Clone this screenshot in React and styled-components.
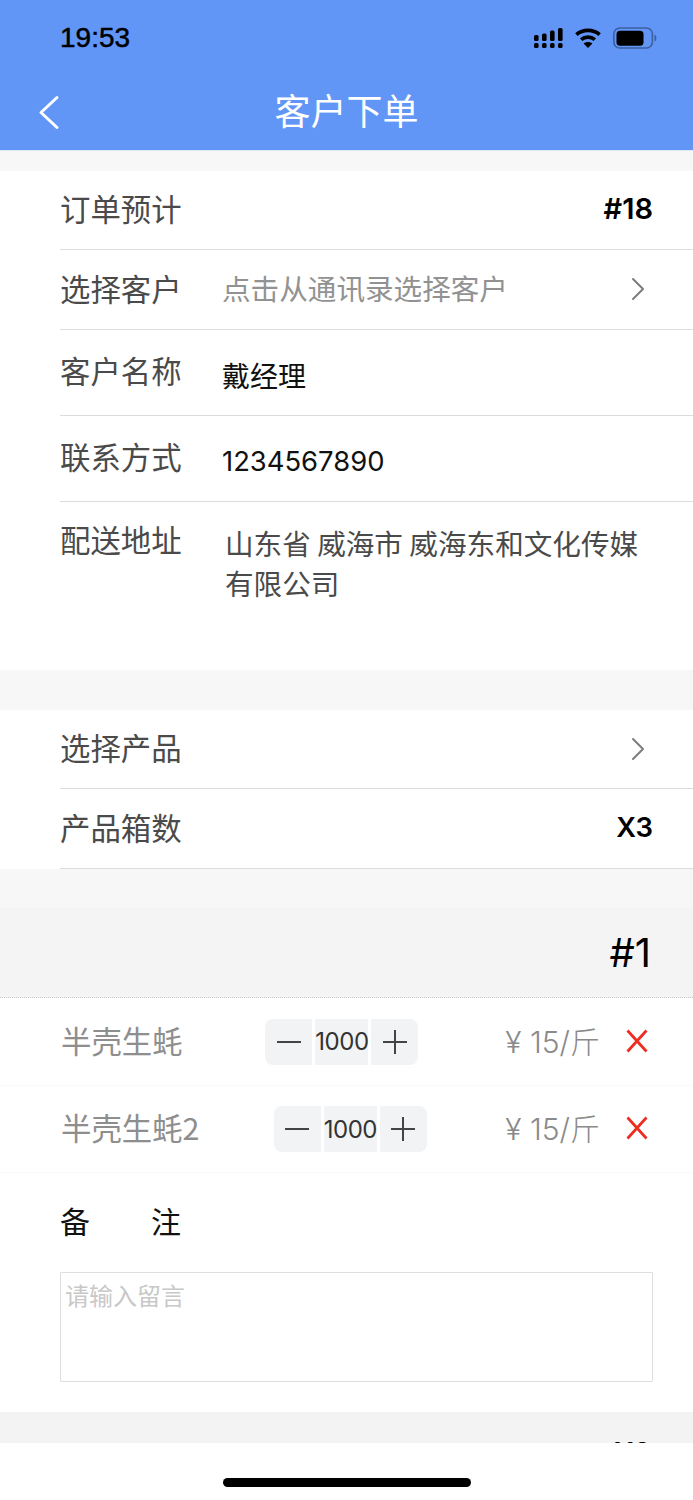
import React from "react";
import styled, { createGlobalStyle } from "styled-components";

const GlobalStyle = createGlobalStyle`
  * { box-sizing: border-box; }
  html, body { margin: 0; padding: 0; background: #fff; }
  body { font-family: Inter, "Noto Sans CJK SC", sans-serif; }
`;

export default function App() {
  return (
    <>
      <GlobalStyle />
      <Page>
        <Header>
          <StatusBar>
            <Time>19:53</Time>
            <StatusIcons>
              <SignalIcon />
              <WifiIcon />
              <BatteryIcon />
            </StatusIcons>
          </StatusBar>
          <NavBar>
            <BackButton>
              <svg width="24" height="36" viewBox="0 0 24 36" fill="none">
                <path d="M20 2.5 L4 17.5 L20 32.5" stroke="#fff" strokeWidth="3" strokeLinecap="round" strokeLinejoin="round" />
              </svg>
            </BackButton>
            <Title>客户下单</Title>
          </NavBar>
        </Header>

        <Gap $h={20} />
        <Section>
          <Row $h={79}>
            <Label>订单预计</Label>
            <Value>#18</Value>
          </Row>
          <Row $h={80}>
            <Label>选择客户</Label>
            <Placeholder>点击从通讯录选择客户</Placeholder>
            <Chevron />
          </Row>
          <Row $h={86}>
            <Label $up>客户名称</Label>
            <InputText $size={28}>戴经理</InputText>
          </Row>
          <Row $h={86}>
            <Label $up>联系方式</Label>
            <InputText $size={27.4}>1234567890</InputText>
          </Row>
          <AddressRow>
            <AddressLabel>配送地址</AddressLabel>
            <Address>山东省 威海市 威海东和文化传媒有限公司</Address>
          </AddressRow>
        </Section>

        <Gap $h={40} />
        <Section>
          <Row $h={79}>
            <Label>选择产品</Label>
            <Chevron />
          </Row>
          <Row $h={80}>
            <Label>产品箱数</Label>
            <Value $size={27.5}>X3</Value>
          </Row>
        </Section>

        <Gap $h={39} />
        <BoxHeader>#1</BoxHeader>
        <Product name="半壳生蚝" h={88} />
        <Product name="半壳生蚝2" h={87} />

        <NoteBlock>
          <NoteLabel>
            <span>备</span>
            <span>注</span>
          </NoteLabel>
          <NoteBox placeholder="请输入留言" readOnly />
        </NoteBlock>

        <NextBox>
          <NextValue>X3</NextValue>
        </NextBox>

        <HomeBar>
          <HomeIndicator />
        </HomeBar>
      </Page>
    </>
  );
}

function Product({ name, h }) {
  return (
    <ProductRow $h={h}>
      <ProductName>{name}</ProductName>
      <StepperSlot>
        <Stepper>
          <StepButton $side="left">
            <svg width="24" height="24" viewBox="0 0 24 24"><path d="M0 12 H24" stroke="#444" strokeWidth="2" /></svg>
          </StepButton>
          <StepCount>1000</StepCount>
          <StepButton $side="right">
            <svg width="24" height="24" viewBox="0 0 24 24"><path d="M0 12 H24 M12 0 V24" stroke="#444" strokeWidth="2" /></svg>
          </StepButton>
        </Stepper>
      </StepperSlot>
      <Price>¥ 15/斤</Price>
      <RemoveIcon>
        <svg width="22" height="24" viewBox="0 0 22 24"><path d="M1.5 1.5 L20.5 22.5 M20.5 1.5 L1.5 22.5" stroke="#ec2f22" strokeWidth="2.8" /></svg>
      </RemoveIcon>
    </ProductRow>
  );
}

function SignalIcon() {
  return (
    <svg width="29" height="20" viewBox="0 0 29 20" fill="#000">
      <rect x="0" y="7" width="4.6" height="6" rx="1.6" />
      <rect x="8" y="5.5" width="4.6" height="7.5" rx="1.6" />
      <rect x="16" y="2.5" width="4.6" height="10.5" rx="1.6" />
      <rect x="24" y="0" width="4.6" height="13" rx="1.6" />
      <rect x="0" y="15" width="4.6" height="5" rx="1.6" />
      <rect x="8" y="15" width="4.6" height="5" rx="1.6" />
      <rect x="16" y="15" width="4.6" height="5" rx="1.6" />
      <rect x="24" y="15" width="4.6" height="5" rx="1.6" />
    </svg>
  );
}

function WifiIcon() {
  return (
    <svg width="26" height="20" viewBox="0 0 26 20" fill="none" stroke="#000" strokeWidth="3.8">
      <path d="M1.4 6.6 C8 1 18 1 24.6 6.6" />
      <path d="M6.2 11.6 C10 8.4 16 8.4 19.8 11.6" />
      <path d="M13 20 L8.6 15.4 C11 13.4 15 13.4 17.4 15.4 Z" fill="#000" stroke="none" />
    </svg>
  );
}

function BatteryIcon() {
  return (
    <svg width="44" height="22" viewBox="0 0 44 22" fill="none">
      <rect x="0.8" y="1" width="38.6" height="20" rx="6" stroke="#3c5f9f" strokeWidth="1.6" />
      <rect x="3.5" y="3.8" width="27" height="15" rx="3.5" fill="#000" />
      <path d="M41.5 7.5 C44 8.5 44 13.5 41.5 14.5 Z" fill="#3c5f9f" />
    </svg>
  );
}

function Chevron() {
  return (
    <ChevronBox>
      <svg width="14" height="24" viewBox="0 0 14 24" fill="none">
        <path d="M2 2 L12 12 L2 22" stroke="#7d7d7d" strokeWidth="2" strokeLinecap="round" strokeLinejoin="round" />
      </svg>
    </ChevronBox>
  );
}

const Page = styled.div`
  position: relative;
  width: 693px;
  height: 1500px;
  overflow: hidden;
  background: #fff;
  font-family: Inter, "Noto Sans CJK SC", sans-serif;
`;

const Header = styled.header`
  height: 151px;
  background: #6196f7;
  display: flex;
  flex-direction: column;
  border-bottom: 1px solid #dfe6f2;
`;

const StatusBar = styled.div`
  height: 76px;
  display: flex;
  align-items: center;
  justify-content: space-between;
  padding: 0 36px 0 60px;
`;

const Time = styled.div`
  font-family: "Liberation Sans", sans-serif;
  font-size: 28px;
  font-weight: 500;
  color: #000;
  -webkit-text-stroke: 0.5px #000;
`;

const StatusIcons = styled.div`
  display: flex;
  align-items: center;
  gap: 12px;
`;

const NavBar = styled.div`
  flex: 1;
  display: grid;
  grid-template-columns: 1fr auto 1fr;
  align-items: center;
  padding-bottom: 5px;
`;

const BackButton = styled.div`
  margin-top: 4px;
  padding-left: 37px;
  display: flex;
`;

const Title = styled.div`
  margin-bottom: 4px;
  font-family: "Noto Sans CJK SC", sans-serif;
  font-size: 36px;
  font-weight: 400;
  color: #fff;
`;

const Gap = styled.div`
  height: ${(p) => p.$h}px;
  background: #f7f7f7;
`;

const Section = styled.section`
  background: #fff;
  padding-left: 60px;
`;

const Row = styled.div`
  height: ${(p) => p.$h}px;
  display: flex;
  align-items: center;
  border-bottom: 1px solid #dcdcdc;
`;

const Label = styled.div`
  width: 162px;
  flex: none;
  margin-bottom: ${(p) => (p.$up ? 6 : 4)}px;
  font-family: "Noto Sans CJK SC", sans-serif;
  font-size: 30.4px;
  font-weight: 400;
  color: #4a4a4a;
  line-height: 40px;
`;

const AddressLabel = styled(Label)`
  margin: -4px 0 0;
`;

const Value = styled.div`
  margin: 0 0 3px auto;
  padding-right: 40px;
  font-family: Inter, sans-serif;
  font-size: ${(p) => p.$size || 29}px;
  font-weight: 600;
  color: #000;
`;

const Placeholder = styled.div`
  margin-bottom: 5px;
  font-family: "Noto Sans CJK SC", sans-serif;
  font-size: 28.6px;
  color: #929292;
`;

const ChevronBox = styled.div`
  margin: 0 0 1px auto;
  padding-right: 48px;
  display: flex;
`;

const InputText = styled.div`
  font-family: Inter, "Noto Sans CJK SC", sans-serif;
  font-size: ${(p) => p.$size}px;
  color: #111;
  padding-top: 5px;
`;

const AddressRow = styled.div`
  height: 168px;
  display: flex;
  align-items: flex-start;
  padding-top: 21px;
`;

const Address = styled.div`
  width: 420px;
  margin-left: 3px;
  font-family: "Noto Sans CJK SC", sans-serif;
  font-size: 28.6px;
  line-height: 40px;
  color: #4a4a4a;
`;

const BoxHeader = styled.div`
  height: 90px;
  background: #f4f4f5;
  border-bottom: 1px dotted #c8c8c8;
  display: flex;
  align-items: center;
  justify-content: flex-end;
  padding: 0 42px 1px 0;
  font-family: Inter, sans-serif;
  font-size: 40px;
  color: #000;
`;

const ProductRow = styled.div`
  height: ${(p) => p.$h}px;
  display: flex;
  align-items: center;
  padding: 0 45px 0 61px;
  border-bottom: 1px solid #f9f9f9;
`;

const ProductName = styled.div`
  margin-bottom: 4px;
  font-family: "Noto Sans CJK SC", sans-serif;
  font-size: 30.4px;
  color: #8e8e8e;
  white-space: nowrap;
`;

const StepperSlot = styled.div`
  flex: 1;
  display: flex;
  justify-content: center;
  padding-right: 4px;
`;

const Stepper = styled.div`
  height: 46px;
  display: flex;
  gap: 3px;
`;

const StepButton = styled.div`
  width: 47px;
  display: flex;
  align-items: center;
  justify-content: center;
  background: #f2f3f5;
  border-radius: ${(p) => (p.$side === "left" ? "8px 0 0 8px" : "0 8px 8px 0")};
`;

const StepCount = styled.div`
  width: 53px;
  display: flex;
  align-items: center;
  justify-content: center;
  background: #f2f3f5;
  font-family: Inter, sans-serif;
  font-size: 24px;
  letter-spacing: -0.5px;
  color: #333;
`;

const Price = styled.div`
  margin-bottom: 4px;
  font-family: Inter, "Noto Sans CJK SC", sans-serif;
  font-size: 30px;
  font-weight: 300;
  color: #8a8a8a;
  white-space: nowrap;
`;

const RemoveIcon = styled.div`
  margin: 0 0 2px 26px;
  display: flex;
`;

const NoteBlock = styled.div`
  height: 239px;
  padding: 27px 40px 0 60px;
`;

const NoteLabel = styled.div`
  width: 121px;
  display: flex;
  justify-content: space-between;
  font-family: "Noto Sans CJK SC", sans-serif;
  font-size: 30px;
  line-height: 40px;
  color: #111;
`;

const NoteBox = styled.textarea`
  display: block;
  width: 593px;
  height: 110px;
  margin-top: 32px;
  padding: 4px 4px;
  border: 1px solid #dedede;
  border-radius: 1px;
  outline: none;
  resize: none;
  font-family: "Noto Sans CJK SC", sans-serif;
  font-size: 24px;
  &::placeholder { color: #c8c8c8; }
`;

const NextBox = styled.div`
  height: 90px;
  background: #f3f3f3;
  display: flex;
  justify-content: flex-end;
  padding: 24px 42px 0 0;
`;

const NextValue = styled.div`
  font-family: Inter, sans-serif;
  font-size: 28px;
  font-weight: 600;
  color: #000;
`;

const HomeBar = styled.div`
  position: absolute;
  left: 0;
  right: 0;
  bottom: 0;
  height: 57px;
  background: #fff;
  display: flex;
  justify-content: center;
  padding-top: 35px;
`;

const HomeIndicator = styled.div`
  width: 248px;
  height: 9px;
  border-radius: 5px;
  background: #000;
`;
